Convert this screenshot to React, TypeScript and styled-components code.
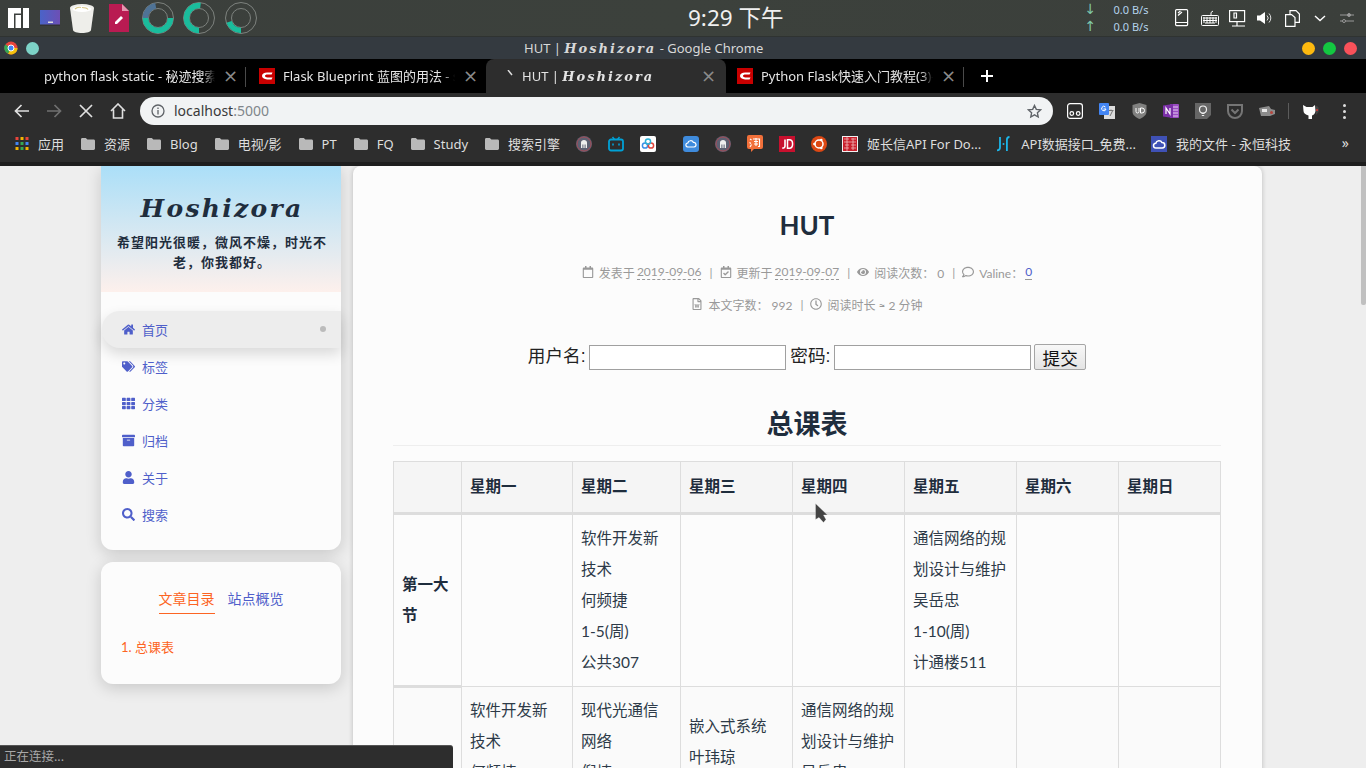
import React from 'react';
import styled, { createGlobalStyle } from 'styled-components';
import {
  FaHome, FaTags, FaTh, FaArchive, FaUser, FaSearch, FaRegCalendar, FaRegCalendarCheck,
  FaEye, FaRegComment, FaRegFileWord, FaRegClock,
} from 'react-icons/fa';

const SANS = `'Noto Sans', 'Noto Sans CJK SC', sans-serif`;
const BODY = `Lato, 'Noto Sans CJK SC', sans-serif`;

const GlobalStyle = createGlobalStyle`
  html, body { margin: 0; padding: 0; width: 1366px; height: 768px; overflow: hidden; background: #eee; }
  * { box-sizing: border-box; }
`;

const Donut = ({ main, accent, turn }: { main: number; accent?: number; turn: number }) => (
  <svg width="32" height="32" viewBox="0 0 32 32">
    <circle cx="16" cy="16" r="15.5" fill="none" stroke="#7d827e" strokeWidth="1" />
    <circle cx="16" cy="16" r="9.5" fill="none" stroke="#7d827e" strokeWidth="1" />
    <circle cx="16" cy="16" r="12.5" fill="none" stroke="#1abc9c" strokeWidth="5.6" pathLength="100"
      strokeDasharray={`${main} 100`} transform={`rotate(${turn} 16 16)`} />
    {accent ? (
      <circle cx="16" cy="16" r="12.5" fill="none" stroke="#4f7396" strokeWidth="5.6" pathLength="100"
        strokeDasharray={`${accent} 100`} transform="rotate(180 16 16)" />
    ) : null}
  </svg>
);

const CsdnIcon = () => (
  <svg width="16" height="16" viewBox="0 0 16 16">
    <rect width="16" height="16" fill="#c90000" />
    <path d="M13.5 4.6H8.2C5 4.6 3 6.2 3 8s2 3.4 5.2 3.4h4.3l1-2H8.4C7 9.4 6 8.8 6 8s1-1.4 2.4-1.4h4.2z" fill="#fff" />
  </svg>
);

const FolderIcon = () => (
  <svg width="14" height="12" viewBox="0 0 14 12">
    <path d="M0 1.4C0 .6.6 0 1.4 0h3.4l1.6 1.6h6.2c.8 0 1.4.6 1.4 1.4v7.6c0 .8-.6 1.4-1.4 1.4H1.4C.6 12 0 11.4 0 10.6z" fill="#b9b9b9" />
  </svg>
);

const AppsIcon = () => (
  <svg width="14" height="13" viewBox="0 0 13 13">
    {['#e8453c', '#f4b400', '#e8453c', '#4285f4', '#34a853', '#4285f4', '#f4b400', '#34a853', '#f4b400'].map((c, i) => (
      <rect key={i} x={(i % 3) * 5} y={Math.floor(i / 3) * 5} width="3" height="3" fill={c} />
    ))}
  </svg>
);

const RobotIcon = () => (
  <svg width="16" height="16" viewBox="0 0 16 16">
    <circle cx="8" cy="8" r="8" fill="#5d6072" />
    <circle cx="8" cy="8" r="7" fill="none" stroke="#a34b56" strokeWidth="1" />
    <path d="M5 12V6.500C5 5 6.300 4 8 4s3 1 3 2.500V12H9.600V8.500H8.600V12H7.400V8.500H6.400V12z" fill="#eee" />
  </svg>
);

const BookmarkLogos: Record<string, React.ReactNode> = {
  bili: (
    <svg width="16" height="16" viewBox="0 0 16 16">
      <rect x="1" y="3.500" width="14" height="11" rx="2" fill="none" stroke="#00a1d6" strokeWidth="1.800" />
      <path d="M4.500 1l2 2.500M11.500 1l-2 2.500" stroke="#00a1d6" strokeWidth="1.400" />
      <path d="M5 7.500v2M11 7.500v2" stroke="#00a1d6" strokeWidth="1.600" />
    </svg>
  ),
  rings: (
    <svg width="16" height="16" viewBox="0 0 16 16">
      <rect width="16" height="16" rx="2" fill="#fff" />
      <circle cx="5" cy="9.500" r="2.600" fill="none" stroke="#3a8ee6" strokeWidth="1.500" />
      <circle cx="11" cy="9.500" r="2.600" fill="none" stroke="#e0463c" strokeWidth="1.500" />
      <circle cx="8" cy="5.500" r="2.600" fill="none" stroke="#2bb3d9" strokeWidth="1.500" />
    </svg>
  ),
  cloud: (
    <svg width="16" height="16" viewBox="0 0 16 16">
      <rect width="16" height="16" rx="3" fill="#3f8bdc" />
      <path d="M5 11a2 2 0 0 1-.2-4 3 3 0 0 1 5.600-.6A2.300 2.300 0 0 1 11 11z" fill="none" stroke="#fff" strokeWidth="1.200" />
    </svg>
  ),
  taobao: (
    <svg width="16" height="17" viewBox="0 0 16 17">
      <path d="M2 0h12a2 2 0 0 1 2 2v10a2 2 0 0 1-2 2H7l-3 3v-3H2a2 2 0 0 1-2-2V2a2 2 0 0 1 2-2z" fill="#f2703a" />
      <path d="M3 4l1.500 1M2.500 7.500L4 8.500M3 12l1.500-2.500M6 4h6.500v7.500h-1.500M7 6.500h4M7 9h4M9 3v8" stroke="#fff" strokeWidth="1.100" fill="none" />
    </svg>
  ),
  jd: (
    <svg width="16" height="16" viewBox="0 0 16 16">
      <rect width="16" height="16" fill="#c8102e" />
      <path d="M6 3.500v6.500c0 1.500-1 2.200-2.800 2" stroke="#fff" strokeWidth="1.600" fill="none" />
      <path d="M8.500 3.800h1.800c2.200 0 3.300 1.600 3.300 4.200s-1.100 4.200-3.300 4.200H8.500z" stroke="#fff" strokeWidth="1.500" fill="none" />
    </svg>
  ),
  ubuntu: (
    <svg width="16" height="16" viewBox="0 0 16 16">
      <circle cx="8" cy="8" r="8" fill="#dd4814" />
      <circle cx="8" cy="8" r="4" fill="none" stroke="#fff" strokeWidth="1.500" />
      <circle cx="3.400" cy="8" r="1.300" fill="#fff" />
      <circle cx="10.300" cy="4" r="1.300" fill="#fff" />
      <circle cx="10.300" cy="12" r="1.300" fill="#fff" />
    </svg>
  ),
  seal: (
    <svg width="16" height="16" viewBox="0 0 16 16">
      <rect width="16" height="16" fill="#f2f2f2" />
      <rect x="1" y="1" width="14" height="14" fill="#c9202c" />
      <path d="M2 3h5M9 3h5M2 6h12M3 9h4M9 9h5M2 12h5M9 12h5M5 1v14M11 2v12" stroke="#f3c9c9" strokeWidth=".7" />
    </svg>
  ),
  jh: (
    <svg width="16" height="16" viewBox="0 0 16 16">
      <path d="M4 1v10.500c0 2-1.200 2.800-3 2.800M13.500 1c-1.800 0-2.600 1-2.600 2.800V15" stroke="#1cb5e8" strokeWidth="1.800" fill="none" />
      <circle cx="7.500" cy="8" r="1" fill="#1cb5e8" />
    </svg>
  ),
  drive: (
    <svg width="16" height="16" viewBox="0 0 16 16">
      <rect width="16" height="16" fill="#3f51b5" />
      <path d="M5 12a2.400 2.400 0 0 1-.2-4.800 3.300 3.300 0 0 1 6.200-.6 2.700 2.700 0 0 1 .2 5.400z" fill="none" stroke="#fff" strokeWidth="1.500" />
    </svg>
  ),
};

const TrayIcons = [
  <svg key="tablet" width="14" height="18" viewBox="0 0 14 18" fill="none" stroke="#fff" strokeWidth="1.200">
    <rect x=".6" y=".6" width="12" height="16" rx="1" />
    <path d="M.6 13.500h12M3 4l2.500-2M3 6.500L7 3" />
  </svg>,
  <svg key="keyboard" width="20" height="18" viewBox="0 0 20 18" fill="none" stroke="#fff" strokeWidth="1">
    <rect x="1.500" y="6.500" width="17" height="10" rx="1" />
    <path d="M3 9h14M3 11.500h14M5 14h10M4 8v6M7 8v6M10 8v6M13 8v6M16 8v6M11 6V3.500L13 2" />
  </svg>,
  <svg key="net" width="17" height="17" viewBox="0 0 17 17" fill="none" stroke="#fff" strokeWidth="1.200">
    <rect x=".6" y=".6" width="15" height="11" />
    <path d="M8 11.500V16H3M8 16h8M5 3h2.500v5H5z" />
  </svg>,
  <svg key="vol" width="15" height="14" viewBox="0 0 15 14">
    <path d="M0 4.500h3L8 1v12L3 9.500H0z" fill="#fff" />
    <path d="M10 4.500a3.500 3.500 0 0 1 0 5M12 2.500a6.500 6.500 0 0 1 0 9" fill="none" stroke="#ddd" />
  </svg>,
  <svg key="copy" width="15" height="17" viewBox="0 0 15 17" fill="none" stroke="#fff" strokeWidth="1.200">
    <path d="M5 4V.6h6l3.400 3.400v8.400H10" />
    <path d="M.6 4.600h6l3.400 3V16.400H.6z" fill="#3a3f3b" />
  </svg>,
  <svg key="chev" width="12" height="7" viewBox="0 0 12 7" fill="none" stroke="#fff" strokeWidth="1.400">
    <path d="M1 1l5 4.500L11 1" />
  </svg>,
  <svg key="sliders" width="14" height="12" viewBox="0 0 14 12" fill="none" stroke="#999">
    <path d="M0 3h14M0 9h14" />
    <circle cx="9" cy="3" r="1.500" fill="#999" />
    <circle cx="4" cy="9" r="1.500" fill="#3a3f3b" />
  </svg>,
];

const ExtensionIcons = [
  <svg key="a" width="16" height="16" viewBox="0 0 16 16" fill="none" stroke="#fff" strokeWidth="1.200">
    <rect x=".6" y=".6" width="14.800" height="14.800" rx="2.500" />
    <circle cx="4.800" cy="10.500" r="1.800" /><circle cx="11.200" cy="10.500" r="1.800" />
  </svg>,
  <svg key="b" width="16" height="16" viewBox="0 0 16 16">
    <rect x="5" y="3" width="11" height="13" fill="#dcdcdc" />
    <rect width="10" height="12" fill="#4285f4" rx="1" />
    <path d="M7 6H4.500M7 6a2.200 2.200 0 1 1-.6-2" stroke="#fff" strokeWidth="1" fill="none" />
    <path d="M10 7.500h4.500M12 6.500v1.500M11 13l2.500-5" stroke="#777" strokeWidth="1" />
  </svg>,
  <svg key="c" width="15" height="16" viewBox="0 0 15 16">
    <path d="M7.500 0l7 2v7c0 3-3.500 5.500-7 7-3.500-1.500-7-4-7-7V2z" fill="#80807f" />
    <path d="M4 5v3.500a1.500 1.500 0 0 0 3 0V5M8.500 5v5h1.500a2.500 2.500 0 0 0 0-5z" stroke="#fff" strokeWidth="1" fill="none" />
  </svg>,
  <svg key="d" width="16" height="16" viewBox="0 0 16 16">
    <rect x="7" y="1" width="9" height="14" rx="1" fill="#9a4cc2" />
    <path d="M9 4h6M9 7h6M9 10h6M9 13h6" stroke="#e5cdf0" />
    <path d="M0 2.500L10 1v14L0 13.500z" fill="#7b2fa8" />
    <path d="M3 11V5l4 6V5" stroke="#fff" strokeWidth="1.200" fill="none" />
  </svg>,
  <svg key="e" width="16" height="16" viewBox="0 0 16 16">
    <path d="M0 0h16v12l-4 4H0z" fill="#666" />
    <circle cx="8" cy="6.500" r="3.500" fill="none" stroke="#eee" strokeWidth="1.200" />
    <path d="M6.500 10.500h3M6.800 12.500h2.400" stroke="#eee" />
  </svg>,
  <svg key="f" width="16" height="15" viewBox="0 0 16 15">
    <path d="M1 1h14v6a7 7 0 0 1-14 0z" fill="none" stroke="#757575" strokeWidth="2" />
    <path d="M4.500 5.500L8 9l3.500-3.500" fill="none" stroke="#757575" strokeWidth="2" />
  </svg>,
  <svg key="g" width="16" height="10" viewBox="0 0 16 10">
    <path d="M0 2l10-2 2 3 4 1v4l-5 2H2z" fill="#8c8c8c" />
    <rect x="3" y="3" width="5" height="3" fill="#e8e8e8" />
    <circle cx="12.500" cy="6.500" r="1.500" fill="#b5453d" />
  </svg>,
];

const OctoIcon = () => (
  <svg width="18" height="17" viewBox="0 0 18 17">
    <path d="M1 2l3.500 2h6L13 2l.5 6c-.5 3-2 4-3.500 4.500V16H6.500v-3.500C3.500 12 1.500 10 1.500 8z" fill="#fff" />
    <path d="M14 3c2.500 0 3.500 3 2.500 6L14 12z" fill="#444" />
    <circle cx="15" cy="7" r="1" fill="#d33" />
  </svg>
);

const bookmarks: { label?: string; icon: React.ReactNode; extra?: number }[] = [
  { label: '应用', icon: <AppsIcon /> },
  { label: '资源', icon: <FolderIcon /> },
  { label: 'Blog', icon: <FolderIcon /> },
  { label: '电视/影', icon: <FolderIcon /> },
  { label: 'PT', icon: <FolderIcon /> },
  { label: 'FQ', icon: <FolderIcon /> },
  { label: 'Study', icon: <FolderIcon /> },
  { label: '搜索引擎', icon: <FolderIcon /> },
  { icon: <RobotIcon />, extra: -1 },
  { icon: BookmarkLogos.bili },
  { icon: BookmarkLogos.rings },
  { icon: BookmarkLogos.cloud, extra: 11 },
  { icon: <RobotIcon /> },
  { icon: BookmarkLogos.taobao },
  { icon: BookmarkLogos.jd },
  { icon: BookmarkLogos.ubuntu },
  { label: '姬长信API For Do...', icon: BookmarkLogos.seal, extra: -1 },
  { label: 'API数据接口_免费...', icon: BookmarkLogos.jh, extra: -2 },
  { label: '我的文件 - 永恒科技', icon: BookmarkLogos.drive, extra: -2 },
];

const navItems = [
  { label: '首页', icon: <FaHome />, active: true },
  { label: '标签', icon: <FaTags /> },
  { label: '分类', icon: <FaTh /> },
  { label: '归档', icon: <FaArchive /> },
  { label: '关于', icon: <FaUser /> },
  { label: '搜索', icon: <FaSearch /> },
];

const headers = ['', '星期一', '星期二', '星期三', '星期四', '星期五', '星期六', '星期日'];
const colWidths = [68, 111, 108, 112, 112, 112, 102, 102];

const rows: { title: string[]; cells: string[][] }[] = [
  {
    title: ['第一大', '节'],
    cells: [
      [],
      ['软件开发新', '技术', '何频捷', '1-5(周)', '公共307'],
      [],
      [],
      ['通信网络的规', '划设计与维护', '吴岳忠', '1-10(周)', '计通楼511'],
      [],
      [],
    ],
  },
  {
    title: ['第二大', '节'],
    cells: [
      ['软件开发新', '技术', '何频捷', '1-5(周)', '公共307'],
      ['现代光通信', '网络', '倪捷', '1-10(周)', '公共307'],
      ['嵌入式系统', '叶玮琼', '1-10(周)', '计通楼511'],
      ['通信网络的规', '划设计与维护', '吴岳忠', '1-10(周)', '计通楼511'],
      [],
      [],
      [],
    ],
  },
];

const App: React.FC = () => {
  return (
    <Screen>
      <GlobalStyle />

      <PanelBar>
        <Launchers>
          <svg width="21" height="20" viewBox="0 0 21 20">
            <path d="M0 0h13v5.500H6V20H0zM7.500 7H13v13H7.500zM15 0h6v20h-6z" fill="#fff" />
          </svg>
          <svg width="20" height="16" viewBox="0 0 20 16">
            <defs>
              <linearGradient id="term" x1="0" y1="0" x2="1" y2="0">
                <stop offset="0" stopColor="#4a63c8" />
                <stop offset="1" stopColor="#6d4fb5" />
              </linearGradient>
            </defs>
            <rect width="20" height="15" fill="url(#term)" />
            <rect x="8" y="11.500" width="5" height="1.500" fill="#ddd" />
            <rect y="14.500" width="20" height="1.500" fill="#333" />
          </svg>
          <svg width="24" height="29" viewBox="0 0 24 29">
            <path d="M0 4a12 4 0 0 1 24 0l-3 22c-.4 2-4 3-9 3s-8.600-1-9-3z" fill="#eeeeea" />
            <ellipse cx="12" cy="5" rx="9.500" ry="3" fill="#fff" />
            <path d="M5 5c2-2 4-2 6-1.500M12 3.500c3 0 5 .5 6 2" stroke="#d8c98a" strokeWidth="1.200" fill="none" />
          </svg>
          <svg width="20" height="28" viewBox="0 0 20 28">
            <path d="M0 0h13l7 7v21H0z" fill="#b91b52" />
            <path d="M13 0l7 7h-7z" fill="#e596b0" />
            <path d="M6 18l6-6 2 2-6 6H6z" fill="#fff" />
          </svg>
          <Donut main={50} accent={22} turn={0} />
          <Donut main={52} turn={90} />
          <Donut main={20} turn={90} />
        </Launchers>
        <Clock>9:29 下午</Clock>
        <Tray>
          <NetArrows>
            <span>↓</span>
            <span>↑</span>
          </NetArrows>
          <NetSpeed>
            <span>0.0 B/s</span>
            <span>0.0 B/s</span>
          </NetSpeed>
          <TrayList>
            {TrayIcons.map((icon) => (
              <TraySlot key={icon.key}>{icon}</TraySlot>
            ))}
          </TrayList>
        </Tray>
      </PanelBar>

      <TitleBar>
        <WindowDots>
          <svg width="14" height="14" viewBox="0 0 14 14">
            <circle cx="7" cy="7" r="6.500" fill="#e8453c" />
            <path d="M7 7L13.500 7A6.500 6.500 0 0 1 4 12.800z" fill="#f4c20d" />
            <path d="M7 7L4 12.800A6.500 6.500 0 0 1 1.200 3.500z" fill="#34a853" />
            <circle cx="7" cy="7" r="3" fill="#4285f4" stroke="#fff" />
          </svg>
          <Dot $color="#7dd3c8" />
        </WindowDots>
        <WindowTitle>
          HUT | <Script>Hoshizora</Script> - Google Chrome
        </WindowTitle>
        <WindowDots $right>
          <Dot $color="#fdb90f" />
          <Dot $color="#13c741" />
          <Dot $color="#f9515a" />
        </WindowDots>
      </TitleBar>

      <TabStrip>
        <Tab $width={246} $pad={44}>
          <TabLabel>python flask static - 秘迹搜索</TabLabel>
          <TabClose>×</TabClose>
          <TabDivider />
        </Tab>
        <Tab $width={240} $pad={13}>
          <CsdnIcon />
          <TabLabel>Flask Blueprint 蓝图的用法 - spark</TabLabel>
          <TabClose>×</TabClose>
        </Tab>
        <Tab $width={240} $pad={21} $active>
          <Spinner viewBox="0 0 6 6"><path d="M1 0l4 5" stroke="#ddd" strokeWidth="1.500" /></Spinner>
          <TabLabel>HUT | <Script>Hoshizora</Script></TabLabel>
          <TabClose>×</TabClose>
        </Tab>
        <Tab $width={238} $pad={11}>
          <CsdnIcon />
          <TabLabel>Python Flask快速入门教程(3)-框架</TabLabel>
          <TabClose>×</TabClose>
          <TabDivider />
        </Tab>
        <NewTab>
          <svg width="12" height="12" viewBox="0 0 12 12">
            <path d="M6 0v12M0 6h12" stroke="#fff" strokeWidth="2" />
          </svg>
        </NewTab>
      </TabStrip>

      <Toolbar>
        <NavButtons>
          <svg width="16" height="14" viewBox="0 0 16 14" fill="none" stroke="#e0e0e0" strokeWidth="1.700">
            <path d="M15 7H2M7.500 1L1.500 7l6 6" />
          </svg>
          <svg width="16" height="14" viewBox="0 0 16 14" fill="none" stroke="#707070" strokeWidth="1.700">
            <path d="M1 7h13M8.500 1l6 6-6 6" />
          </svg>
          <svg width="14" height="14" viewBox="0 0 14 14" fill="none" stroke="#e0e0e0" strokeWidth="1.700">
            <path d="M1 1l12 12M13 1L1 13" />
          </svg>
          <svg width="16" height="16" viewBox="0 0 16 16" fill="none" stroke="#e0e0e0" strokeWidth="1.600">
            <path d="M1 8l7-7 7 7M3.500 6.500V15h9V6.500" />
          </svg>
        </NavButtons>
        <AddressBar>
          <svg width="14" height="14" viewBox="0 0 14 14" fill="none" stroke="#5f6368" strokeWidth="1.300">
            <circle cx="7" cy="7" r="6" />
            <path d="M7 6v4.500M7 3.500v1.500" />
          </svg>
          <Url>localhost<UrlPort>:5000</UrlPort></Url>
          <svg width="15" height="15" viewBox="0 0 15 15" fill="none" stroke="#5f6368" strokeWidth="1.400">
            <path d="M7.500 1.500l1.800 3.900 4.200.5-3.100 2.900.8 4.200-3.700-2.100-3.700 2.100.8-4.200L1.500 5.900l4.200-.5z" />
          </svg>
        </AddressBar>
        <Extensions>
          {ExtensionIcons.map((icon) => (
            <ExtSlot key={icon.key}>{icon}</ExtSlot>
          ))}
          <ToolbarDivider />
          <ExtSlot><OctoIcon /></ExtSlot>
          <MoreDots><i /><i /><i /></MoreDots>
        </Extensions>
      </Toolbar>

      <BookmarkBar>
        {bookmarks.map((b, i) => (
          <Bookmark key={i} $extra={b.extra ?? 0}>
            {b.icon}
            {b.label ? <BookmarkLabel>{b.label}</BookmarkLabel> : null}
          </Bookmark>
        ))}
        <BookmarkMore>»</BookmarkMore>
      </BookmarkBar>

      <Page>
        <Sidebar>
          <SideCard>
            <BrandHeader>
              <BrandName>Hoshizora</BrandName>
              <BrandMotto>希望阳光很暖，微风不燥，时光不老，你我都好。</BrandMotto>
            </BrandHeader>
            <NavList>
              {navItems.map((item) => (
                <NavItem key={item.label} $active={item.active}>
                  <NavIcon>{item.icon}</NavIcon>
                  {item.label}
                  {item.active ? <NavDot /> : null}
                </NavItem>
              ))}
            </NavList>
          </SideCard>
          <TocCard>
            <TocTabs>
              <TocTab $active>文章目录</TocTab>
              <TocTab>站点概览</TocTab>
            </TocTabs>
            <TocLink>1. 总课表</TocLink>
          </TocCard>
        </Sidebar>

        <Article>
          <PostTitle>HUT</PostTitle>
          <MetaLine>
            <FaRegCalendar />发表于<MetaDate>2019-09-06</MetaDate>
            <MetaSep>|</MetaSep>
            <FaRegCalendarCheck />更新于<MetaDate>2019-09-07</MetaDate>
            <MetaSep>|</MetaSep>
            <FaEye />阅读次数： 0
            <MetaSep>|</MetaSep>
            <FaRegComment />Valine：<MetaCount>0</MetaCount>
          </MetaLine>
          <MetaLine>
            <FaRegFileWord />本文字数： 992
            <MetaSep>|</MetaSep>
            <FaRegClock />阅读时长 ≈ 2 分钟
          </MetaLine>

          <LoginForm>
            用户名: <TextInput type="text" /> 密码: <TextInput type="password" /> <SubmitButton type="button">提交</SubmitButton>
          </LoginForm>

          <SectionTitle>总课表</SectionTitle>

          <Timetable>
            <colgroup>
              {colWidths.map((w, i) => (
                <col key={i} width={w} />
              ))}
            </colgroup>
            <thead>
              <tr>
                {headers.map((h, i) => (
                  <HeadCell key={i}>{h}</HeadCell>
                ))}
              </tr>
            </thead>
            <tbody>
              {rows.map((row) => (
                <tr key={row.title[0]}>
                  <RowTitle>
                    {row.title.map((line) => (
                      <div key={line}>{line}</div>
                    ))}
                  </RowTitle>
                  {row.cells.map((lines, i) => (
                    <Cell key={i}>
                      {lines.map((line, j) => (
                        <div key={j}>{line}</div>
                      ))}
                    </Cell>
                  ))}
                </tr>
              ))}
            </tbody>
          </Timetable>
        </Article>

        <ScrollThumb />
      </Page>

      <StatusBubble>正在连接...</StatusBubble>
      <Cursor width="13" height="21" viewBox="0 0 13 21">
        <path d="M.5 .5v16l3.500-2 4.500 5 2.500-3-2.500-4.500h4z" fill="#444" stroke="#fff" strokeOpacity=".5" strokeWidth=".6" />
      </Cursor>
    </Screen>
  );
};

export default App;

const Screen = styled.div`
  position: relative;
  width: 1366px;
  height: 768px;
  overflow: hidden;
  display: flex;
  flex-direction: column;
  font-family: ${BODY};
`;

const PanelBar = styled.div`
  flex: 0 0 37px;
  display: grid;
  grid-template-columns: 688px auto 1fr;
  align-items: center;
  background: linear-gradient(90deg, #3b3f3c, #3c413c 50%, #3b3f3b);
  border-bottom: 1px solid #2f3331;
`;

const Launchers = styled.div`
  display: flex;
  align-items: center;
  gap: 10px;
  padding-left: 8px;

  svg:nth-child(1) { margin-right: 1px; }
  svg:nth-child(3) { margin-right: 5px; }
  svg:nth-child(4) { margin-right: 3px; }
  svg:nth-child(5) { margin-right: -1px; }
`;

const Clock = styled.div`
  font-family: ${SANS};
  font-size: 22.5px;
  color: #f0f0f0;
  line-height: 36px;
`;

const Tray = styled.div`
  display: flex;
  align-items: center;
  justify-content: flex-end;
  height: 36px;
  padding-right: 5px;
`;

const NetArrows = styled.div`
  display: flex;
  flex-direction: column;
  width: 29px;
  font: 14px/17px 'DejaVu Sans', sans-serif;
  color: #7fc8a9;
`;

const NetSpeed = styled.div`
  display: flex;
  flex-direction: column;
  width: 55px;
  font: 11px/17px ${SANS};
  color: #b4d3ec;
`;

const TrayList = styled.div`
  display: flex;
  align-items: center;
`;

const TraySlot = styled.div`
  width: 27.5px;
  display: flex;
  justify-content: center;
`;

const TitleBar = styled.div`
  flex: 0 0 22px;
  overflow: hidden;
  display: grid;
  grid-template-columns: 521px auto 1fr;
  align-items: center;
  background: #343a40;
  padding: 0 9px 0 3px;
`;

const WindowDots = styled.div<{ $right?: boolean }>`
  display: flex;
  align-items: center;
  gap: 8px;
  justify-content: ${({ $right }) => ($right ? 'flex-end' : 'flex-start')};
  padding-left: ${({ $right }) => ($right ? '0' : '1px')};
`;

const Dot = styled.span<{ $color: string }>`
  width: 13px;
  height: 13px;
  border-radius: 50%;
  background: ${({ $color }) => $color};
`;

const WindowTitle = styled.div`
  font: 13px/20px ${SANS};
  color: #d8d8d8;
`;

const Script = styled.span`
  font-family: 'DejaVu Serif', serif;
  font-size: 13px;
  line-height: 1;
  font-style: italic;
  font-weight: 700;
  letter-spacing: 2px;
`;

const TabStrip = styled.div`
  flex: 0 0 34px;
  overflow: hidden;
  display: flex;
  align-items: stretch;
  background: #000;
`;

const Tab = styled.div<{ $width: number; $pad: number; $active?: boolean }>`
  position: relative;
  flex: 0 0 ${({ $width }) => $width}px;
  min-width: 0;
  display: flex;
  align-items: center;
  gap: 8px;
  padding: 0 ${({ $active }) => ($active ? 10 : 8)}px 0 ${({ $pad }) => $pad}px;
  background: ${({ $active }) => ($active ? '#2d2d2d' : 'transparent')};
  border-radius: ${({ $active }) => ($active ? '8px 8px 0 0' : '0')};
  color: #e4e4e4;
  font: 13px/34px ${SANS};
`;

const TabLabel = styled.div`
  flex: 1;
  min-width: 0;
  overflow: hidden;
  white-space: nowrap;
  -webkit-mask-image: linear-gradient(90deg, #000 calc(100% - 12px), transparent);
  mask-image: linear-gradient(90deg, #000 calc(100% - 12px), transparent);
`;

const TabClose = styled.span`
  flex: 0 0 12px;
  font: 18px/34px 'DejaVu Sans', sans-serif;
  color: #8a8a8a;
  text-align: center;
`;

const TabDivider = styled.span`
  position: absolute;
  right: 0;
  top: 8px;
  height: 20px;
  width: 1px;
  background: #4a4a4a;
`;

const Spinner = styled.svg`
  width: 6px;
  height: 6px;
  margin-right: 1px;
  margin-bottom: 6px;
`;

const NewTab = styled.div`
  display: flex;
  align-items: center;
  padding-left: 17px;
`;

const Toolbar = styled.div`
  flex: 0 0 36px;
  display: flex;
  align-items: center;
  background: #2d2d2d;
`;

const NavButtons = styled.div`
  flex: 0 0 140px;
  display: grid;
  grid-template-columns: repeat(4, 32px);
  justify-items: center;
  align-items: center;
  padding-left: 6px;
`;

const AddressBar = styled.div`
  flex: 0 0 913px;
  height: 28px;
  border-radius: 14px;
  background: #f1f3f4;
  display: flex;
  align-items: center;
  padding: 0 11px;
  gap: 9px;
`;

const Url = styled.div`
  flex: 1;
  font: 14px/28px ${SANS};
  color: #3a3a3a;
`;

const UrlPort = styled.span`
  color: #80868b;
`;

const Extensions = styled.div`
  flex: 1;
  display: flex;
  align-items: center;
  padding-left: 6px;
`;

const ExtSlot = styled.div`
  flex: 0 0 32px;
  display: flex;
  justify-content: center;
  align-items: center;
`;

const ToolbarDivider = styled.span`
  width: 1px;
  height: 16px;
  background: #5c5c5c;
  margin: 0 6px 0 5px;
`;

const MoreDots = styled.div`
  margin-left: 16px;
  display: flex;
  flex-direction: column;
  gap: 3px;

  i {
    width: 3px;
    height: 3px;
    border-radius: 50%;
    background: #ddd;
  }
`;

const BookmarkBar = styled.div`
  position: relative;
  flex: 0 0 37px;
  display: flex;
  align-items: center;
  gap: 16px;
  padding: 0 0 4px 15px;
  background: #2d2d2d;
  border-bottom: 4px solid #1e1e1e;
`;

const Bookmark = styled.div<{ $extra: number }>`
  display: flex;
  align-items: center;
  gap: 9px;
  margin-left: ${({ $extra }) => $extra}px;
`;

const BookmarkLabel = styled.span`
  font: 13px/18px ${SANS};
  color: #dedede;
  white-space: nowrap;
  margin-right: 1px;
`;

const BookmarkMore = styled.span`
  position: absolute;
  right: 17px;
  top: 4px;
  font: 14px/20px ${SANS};
  color: #ddd;
`;

const Page = styled.div`
  position: relative;
  flex: 1;
  min-height: 0;
  display: flex;
  align-items: flex-start;
  gap: 12px;
  padding-left: 101px;
  background: #eee;
  overflow: hidden;
`;

const Sidebar = styled.aside`
  flex: 0 0 240px;
  display: flex;
  flex-direction: column;
  gap: 12px;
`;

const SideCard = styled.div`
  background: #fcfcfc;
  border-radius: 0 0 12px 12px;
  box-shadow: 0 4px 16px rgba(0, 0, 0, 0.16);
  padding-bottom: 17px;
`;

const BrandHeader = styled.div`
  height: 126px;
  padding: 28px 11px 0 13px;
  background: linear-gradient(180deg, #abdff8, #fdf0ec);
  text-align: center;
`;

const BrandName = styled.div`
  font-family: 'DejaVu Serif', serif;
  font-size: 25px;
  font-style: italic;
  font-weight: 700;
  line-height: 30px;
  letter-spacing: 2.3px;
  color: #1f2d3d;
`;

const BrandMotto = styled.div`
  margin-top: 8px;
  font-size: 13px;
  font-weight: 700;
  line-height: 20px;
  letter-spacing: 1px;
  color: #1f2d3d;
`;

const NavList = styled.nav`
  padding-top: 19px;
`;

const NavItem = styled.div<{ $active?: boolean }>`
  position: relative;
  display: flex;
  align-items: center;
  height: 37px;
  padding-left: 20px;
  margin-left: 1px;
  font-size: 13px;
  color: #4f5fca;
  background: ${({ $active }) => ($active ? '#ededed' : 'transparent')};
  border-radius: 18px 0 0 18px;
  box-shadow: ${({ $active }) => ($active ? '0 6px 14px rgba(0, 0, 0, 0.14)' : 'none')};
`;

const NavIcon = styled.span`
  flex: 0 0 20px;
  display: flex;
  align-items: center;
  font-size: 13px;
`;

const NavDot = styled.span`
  position: absolute;
  right: 15px;
  top: 15px;
  width: 6px;
  height: 6px;
  border-radius: 50%;
  background: #bbb;
`;

const TocCard = styled.div`
  height: 122px;
  background: #fcfcfc;
  border-radius: 12px;
  box-shadow: 0 4px 16px rgba(0, 0, 0, 0.16);
  padding: 26px 20px 0;
`;

const TocTabs = styled.div`
  display: flex;
  justify-content: center;
  gap: 13px;
`;

const TocTab = styled.div<{ $active?: boolean }>`
  font-size: 14px;
  line-height: 22px;
  padding-bottom: 3px;
  color: ${({ $active }) => ($active ? '#fc6423' : '#4f5fca')};
  border-bottom: 1px solid ${({ $active }) => ($active ? '#fc6423' : 'transparent')};
`;

const TocLink = styled.div`
  margin-top: 23px;
  font-size: 13px;
  line-height: 20px;
  color: #fc6423;
`;

const Article = styled.main`
  flex: 0 0 908px;
  height: 1000px;
  padding: 41px 41px 0 40px;
  background: #fcfcfc;
  border-radius: 8px;
  box-shadow: 0 0 5px rgba(0, 0, 0, 0.22);
`;

const PostTitle = styled.h1`
  margin: 0 0 13px;
  text-align: center;
  font-size: 26px;
  font-weight: 700;
  line-height: 36px;
  color: #1f2d3d;
`;

const MetaLine = styled.div`
  display: flex;
  justify-content: center;
  align-items: center;
  white-space: pre;
  height: 32px;
  font-size: 12px;
  color: #999;

  svg {
    font-size: 12px;
    margin-right: 5px;
  }
`;

const MetaDate = styled.span`
  border-bottom: 1px dashed #999;
  line-height: 15px;
  margin-left: 2px;
`;

const MetaCount = styled.span`
  border-bottom: 1px solid #999;
  line-height: 15px;
  margin-left: 2px;
  color: #4f5fca;
`;

const MetaSep = styled.span`
  margin: 0 7px 0 8px;
`;

const LoginForm = styled.form`
  margin-top: 23px;
  text-align: center;
  font-family: 'Liberation Sans', 'Noto Sans CJK SC', sans-serif;
  font-size: 17.6px;
  line-height: 27px;
  word-spacing: -1px;
  color: #222;
`;

const TextInput = styled.input`
  width: 197px;
  height: 25px;
  padding: 0 2px;
  vertical-align: middle;
  border: 1px solid #a0a0a0;
  background: #fff;
  border-radius: 0;
  outline: none;
`;

const SubmitButton = styled.button`
  height: 26px;
  width: 52px;
  padding: 0;
  margin-left: -1px;
  vertical-align: middle;
  font: 17.6px 'Liberation Sans', 'Noto Sans CJK SC', sans-serif;
  color: #111;
  background: linear-gradient(#f8f8f8, #e4e4e4);
  border: 1px solid #a5a5a5;
  border-radius: 2px;
`;

const SectionTitle = styled.h2`
  margin: 36px 0 15px;
  padding-bottom: 3px;
  text-align: center;
  font-size: 27px;
  font-weight: 700;
  line-height: 36px;
  color: #1f2d3d;
  border-bottom: 1px solid #eee;
`;

const Timetable = styled.table`
  width: 827px;
  table-layout: fixed;
  border-collapse: collapse;
  font-size: 15.5px;
  line-height: 31px;
  color: #2d3a48;
  white-space: nowrap;

  tbody tr:nth-child(even) { background: #fafafa; }
`;

const HeadCell = styled.th`
  height: 52px;
  padding: 7px 8px 9px;
  text-align: left;
  font-weight: 700;
  background: #f5f5f5;
  color: #1f2d3d;
  border: 1px solid #ddd;
  border-bottom: 3px solid #ddd;
`;

const RowTitle = styled.th`
  padding: 8px;
  text-align: left;
  font-weight: 700;
  color: #1f2d3d;
  border: 1px solid #ddd;
  border-bottom: 3px solid #ddd;
`;

const Cell = styled.td`
  padding: 8px;
  border: 1px solid #ddd;
`;

const ScrollThumb = styled.div`
  position: absolute;
  top: -3px;
  right: 0;
  width: 5px;
  height: 142px;
  background: #c0c0c0;
  border-radius: 0 0 2px 2px;
`;

const StatusBubble = styled.div`
  position: absolute;
  left: 0;
  bottom: 0;
  width: 453px;
  height: 23px;
  padding-left: 4px;
  background: #2d2d2d;
  border-radius: 0 3px 0 0;
  border-top: 1px solid #555;
  font: 12.5px/22px ${SANS};
  color: #a8a8a8;
`;

const Cursor = styled.svg`
  position: absolute;
  left: 815px;
  top: 503px;
`;
